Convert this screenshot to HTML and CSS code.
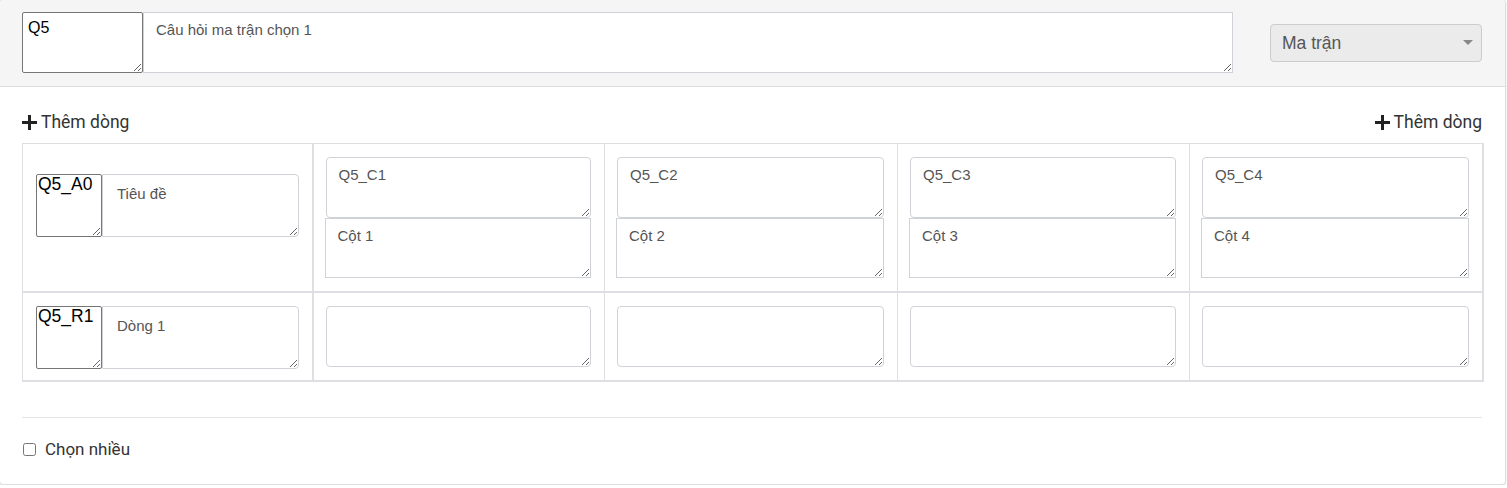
FILE: index.html
```html
<!DOCTYPE html>
<html lang="vi">
<head>
<meta charset="utf-8">
<title>Câu hỏi ma trận</title>
<link rel="stylesheet" href="styles.css">
</head>
<body>
<div class="panel">
  <div class="panel-heading">
    <div class="q-row">
      <textarea class="code code-lg">Q5</textarea>
      <textarea class="fc q-title">Câu hỏi ma trận chọn 1</textarea>
      <div class="select"><span class="select-text">Ma trận</span><span class="caret"></span></div>
    </div>
  </div>
  <div class="panel-body">
    <div class="actions">
      <span class="add"><svg class="plus" width="15" height="15" viewBox="0 0 15 15"><rect x="6" y="0" width="3" height="15"/><rect x="0" y="6" width="15" height="3"/></svg>Thêm dòng</span>
      <span class="add"><svg class="plus" width="15" height="15" viewBox="0 0 15 15"><rect x="6" y="0" width="3" height="15"/><rect x="0" y="6" width="15" height="3"/></svg>Thêm dòng</span>
    </div>
    <table class="matrix">
      <colgroup>
        <col class="w-label"><col class="w-a"><col class="w-b"><col class="w-a"><col class="w-b">
      </colgroup>
      <tr class="head-row">
        <td class="label-cell"><div class="pair pair-head"><textarea class="code">Q5_A0</textarea><textarea class="fc label">Tiêu đề</textarea></div></td>
        <td class="col-cell"><textarea class="fc col-code">Q5_C1</textarea><textarea class="fc col-name">Cột 1</textarea></td>
        <td class="col-cell"><textarea class="fc col-code">Q5_C2</textarea><textarea class="fc col-name">Cột 2</textarea></td>
        <td class="col-cell"><textarea class="fc col-code">Q5_C3</textarea><textarea class="fc col-name">Cột 3</textarea></td>
        <td class="col-cell last"><textarea class="fc col-code">Q5_C4</textarea><textarea class="fc col-name">Cột 4</textarea></td>
      </tr>
      <tr class="body-row">
        <td class="label-cell"><div class="pair"><textarea class="code">Q5_R1</textarea><textarea class="fc label">Dòng 1</textarea></div></td>
        <td class="col-cell"><textarea class="fc cell-input"></textarea></td>
        <td class="col-cell"><textarea class="fc cell-input"></textarea></td>
        <td class="col-cell"><textarea class="fc cell-input"></textarea></td>
        <td class="col-cell last"><textarea class="fc cell-input"></textarea></td>
      </tr>
    </table>
    <hr class="sep">
    <label class="check"><input type="checkbox" class="cb"><span>Chọn nhiều</span></label>
  </div>
</div>
</body>
</html>
```
FILE: styles.css
```css
* { box-sizing: border-box; }
html, body { margin: 0; padding: 0; background: #fff; }
body {
  font-family: Roboto, "Liberation Sans", Arial, sans-serif;
  color: #333;
  font-size: 14px;
}
.panel {
  width: 1507px;
  margin-left: -1px;
  margin-top: -1px;
  border: 1px solid #dddddd;
  border-radius: 4px;
  box-shadow: 0 1px 2px rgba(0, 0, 0, 0.12);
  background: #fff;
}
.panel-heading {
  background: #f5f5f5;
  border-bottom: 1px solid #dddddd;
  padding: 12px 23px 13px 22px;
  border-radius: 3px 3px 0 0;
}
.q-row {
  display: flex;
  align-items: center;
}
textarea {
  display: block;
  margin: 0;
  font-family: "Liberation Sans", Arial, sans-serif;
}
.code {
  border: 1px solid #767676;
  border-radius: 2px;
  background: #fff;
  color: #000;
  font-size: 17.5px;
  line-height: 1;
  padding: 1px 0 0 1px;
  width: 66px;
  height: 63px;
}
.code-lg {
  width: 121px;
  height: 61px;
  font-size: 16px;
  line-height: normal;
  padding: 6px 5px;
}
.fc {
  border: 1px solid #cfd3d8;
  background: #fff;
  color: #555;
  font-size: 15px;
  line-height: 20px;
  padding: 7px 12px 6px;
}
.q-title {
  width: 1090px;
  height: 61px;
  border-radius: 0;
}
.select {
  margin-left: 37px;
  width: 212px;
  height: 38px;
  background: #ebebeb;
  border: 1px solid #cccccc;
  border-radius: 4px;
  display: flex;
  align-items: center;
  justify-content: space-between;
  padding: 1px 8px 0 11px;
  font-family: "Liberation Sans", Arial, sans-serif;
  font-size: 17.5px;
  color: #555;
}
.caret {
  width: 0;
  height: 0;
  border-left: 5px solid transparent;
  border-right: 5px solid transparent;
  border-top: 5px solid #888;
  margin-top: -2px;
}
.panel-body {
  padding: 23px 23px 0 22px;
  height: 397px;
}
.actions {
  display: flex;
  justify-content: space-between;
  align-items: center;
  height: 24px;
  margin-bottom: 9px;
}
.add {
  display: flex;
  align-items: center;
  font-size: 17.5px;
  color: #333;
}
.plus {
  fill: #222;
  margin-right: 4px;
}
.matrix {
  width: 1460px;
  table-layout: fixed;
  border-collapse: collapse;
}
.w-label { width: 290px; }
.w-a { width: 292px; }
.w-b { width: 293px; }
.matrix td {
  border: 1px solid #dddfe2;
  padding: 13px;
  vertical-align: top;
}
.matrix .col-cell { padding-left: 12px; }
.matrix .label-cell { border-right: 2px solid #dddfe2; }
.matrix .last { border-right: 2px solid #dddfe2; }
.head-row td { border-bottom: 2px solid #dddfe2; }
.body-row td { border-bottom: 2px solid #dddfe2; padding-bottom: 11px; }
.pair { display: flex; }
.pair-head { margin-top: 17px; }
.label {
  flex: 1;
  height: 63px;
  border-radius: 0 4px 4px 0;
  padding: 9px 14px;
}
.col-code {
  width: 100%;
  height: 61px;
  border-radius: 4px;
}
.col-name {
  width: calc(100% + 1px);
  margin-left: -1px;
  height: 60px;
  border-radius: 0;
}
.cell-input {
  width: 100%;
  height: 61px;
  border-radius: 4px;
}
.sep {
  border: 0;
  border-top: 1px solid #e5e5e5;
  margin: 35px 0 0;
}
.check {
  display: flex;
  align-items: center;
  margin-top: 21px;
  font-size: 17px;
  color: #333;
}
.cb {
  width: 13px;
  height: 13px;
  margin: 0 9px 0 1px;
}
```
